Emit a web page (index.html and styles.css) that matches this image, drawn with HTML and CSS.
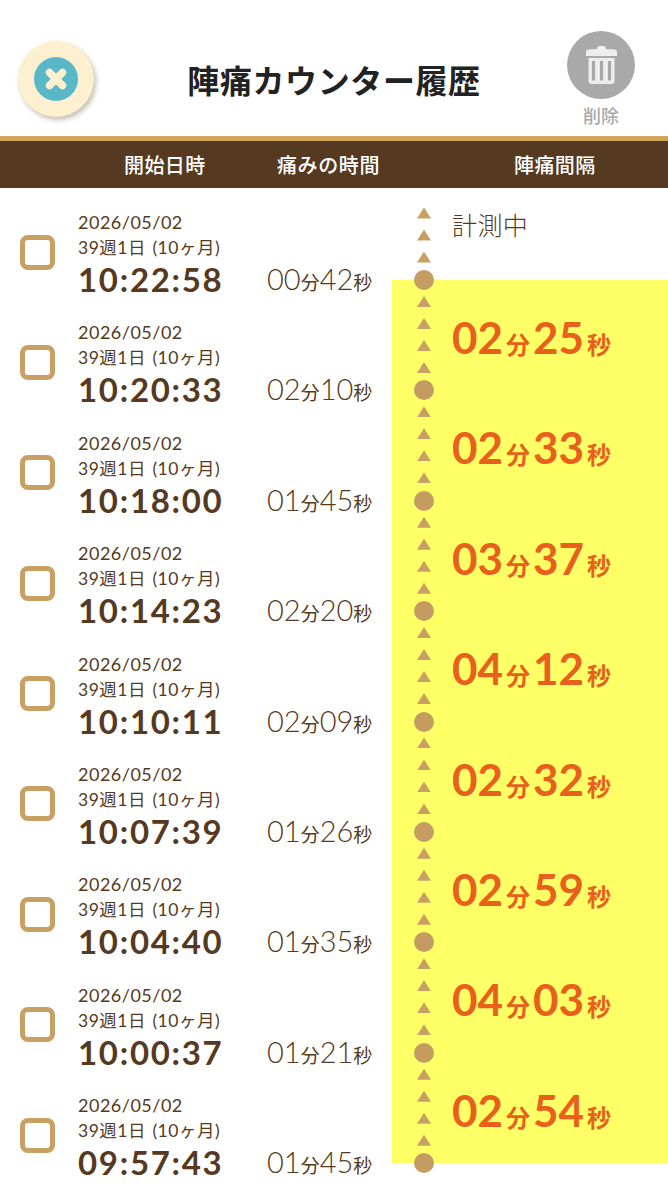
FILE: index.html
```html
<!DOCTYPE html>
<html lang="ja">
<head>
    <meta charset="UTF-8">
    <meta name="viewport" content="width=device-width, initial-scale=1.0">
    <title>陣痛カウンター履歴</title>
    <link rel="stylesheet" href="styles.css">
</head>
<body>
    <header class="top-bar">
        <button class="close-btn" type="button" aria-label="閉じる">
            <span class="close-badge">
                <svg viewBox="0 0 24 24" width="24" height="24"><path d="M5.500 5.500 18.500 18.500M18.500 5.500 5.500 18.500" stroke="#fdf0d0" stroke-width="7.500" stroke-linecap="round"/></svg>
            </span>
        </button>
        <h1>陣痛カウンター履歴</h1>
        <div class="delete-btn">
            <span class="delete-badge">
                <svg viewBox="0 0 31 38" width="31" height="38">
                    <path d="M11 3Q11 0 14 0H17Q20 0 20 3L29 3.500Q31 3.700 31 6V10H0V6Q0 3.700 2 3.500Z" fill="#eee"/>
                    <path d="M2.500 12H28.500V35Q28.500 38 25.500 38H5.500Q2.500 38 2.500 35Z" fill="#eee"/>
                    <path d="M7.500 15V34.500M15.500 15V34.500M23.500 15V34.500" stroke="#a9a9a9" stroke-width="3.200"/>
                </svg>
            </span>
            <span class="delete-label">削除</span>
        </div>
    </header>

    <div class="col-head">
        <span class="col-start">開始日時</span>
        <span class="col-pain">痛みの時間</span>
        <span class="col-gap">陣痛間隔</span>
    </div>

    <main class="history">
        <div class="records">
            <div class="record">
                <span class="check"></span>
                <div class="date">2026/05/02</div>
                <div class="week">39週1日 (10ヶ月)</div>
                <div class="time">10:22:58</div>
                <div class="pain">00<small>分</small>42<small>秒</small></div>
            </div>
            <div class="record">
                <span class="check"></span>
                <div class="date">2026/05/02</div>
                <div class="week">39週1日 (10ヶ月)</div>
                <div class="time">10:20:33</div>
                <div class="pain">02<small>分</small>10<small>秒</small></div>
            </div>
            <div class="record">
                <span class="check"></span>
                <div class="date">2026/05/02</div>
                <div class="week">39週1日 (10ヶ月)</div>
                <div class="time">10:18:00</div>
                <div class="pain">01<small>分</small>45<small>秒</small></div>
            </div>
            <div class="record">
                <span class="check"></span>
                <div class="date">2026/05/02</div>
                <div class="week">39週1日 (10ヶ月)</div>
                <div class="time">10:14:23</div>
                <div class="pain">02<small>分</small>20<small>秒</small></div>
            </div>
            <div class="record">
                <span class="check"></span>
                <div class="date">2026/05/02</div>
                <div class="week">39週1日 (10ヶ月)</div>
                <div class="time">10:10:11</div>
                <div class="pain">02<small>分</small>09<small>秒</small></div>
            </div>
            <div class="record">
                <span class="check"></span>
                <div class="date">2026/05/02</div>
                <div class="week">39週1日 (10ヶ月)</div>
                <div class="time">10:07:39</div>
                <div class="pain">01<small>分</small>26<small>秒</small></div>
            </div>
            <div class="record">
                <span class="check"></span>
                <div class="date">2026/05/02</div>
                <div class="week">39週1日 (10ヶ月)</div>
                <div class="time">10:04:40</div>
                <div class="pain">01<small>分</small>35<small>秒</small></div>
            </div>
            <div class="record">
                <span class="check"></span>
                <div class="date">2026/05/02</div>
                <div class="week">39週1日 (10ヶ月)</div>
                <div class="time">10:00:37</div>
                <div class="pain">01<small>分</small>21<small>秒</small></div>
            </div>
            <div class="record">
                <span class="check"></span>
                <div class="date">2026/05/02</div>
                <div class="week">39週1日 (10ヶ月)</div>
                <div class="time">09:57:43</div>
                <div class="pain">01<small>分</small>45<small>秒</small></div>
            </div>
        </div>

        <div class="intervals">
            <section class="segment segment-current">
                <div class="track"><i class="tri"></i><i class="tri"></i><i class="tri"></i><i class="dot"></i></div>
                <div class="measuring">計測中</div>
            </section>
            <section class="segment">
                <div class="track"><i class="tri"></i><i class="tri"></i><i class="tri"></i><i class="tri"></i><i class="dot"></i></div>
                <div class="gap">02<small>分</small>25<small>秒</small></div>
            </section>
            <section class="segment">
                <div class="track"><i class="tri"></i><i class="tri"></i><i class="tri"></i><i class="tri"></i><i class="dot"></i></div>
                <div class="gap">02<small>分</small>33<small>秒</small></div>
            </section>
            <section class="segment">
                <div class="track"><i class="tri"></i><i class="tri"></i><i class="tri"></i><i class="tri"></i><i class="dot"></i></div>
                <div class="gap">03<small>分</small>37<small>秒</small></div>
            </section>
            <section class="segment">
                <div class="track"><i class="tri"></i><i class="tri"></i><i class="tri"></i><i class="tri"></i><i class="dot"></i></div>
                <div class="gap">04<small>分</small>12<small>秒</small></div>
            </section>
            <section class="segment">
                <div class="track"><i class="tri"></i><i class="tri"></i><i class="tri"></i><i class="tri"></i><i class="dot"></i></div>
                <div class="gap">02<small>分</small>32<small>秒</small></div>
            </section>
            <section class="segment">
                <div class="track"><i class="tri"></i><i class="tri"></i><i class="tri"></i><i class="tri"></i><i class="dot"></i></div>
                <div class="gap">02<small>分</small>59<small>秒</small></div>
            </section>
            <section class="segment">
                <div class="track"><i class="tri"></i><i class="tri"></i><i class="tri"></i><i class="tri"></i><i class="dot"></i></div>
                <div class="gap">04<small>分</small>03<small>秒</small></div>
            </section>
            <section class="segment">
                <div class="track"><i class="tri"></i><i class="tri"></i><i class="tri"></i><i class="tri"></i><i class="dot"></i></div>
                <div class="gap">02<small>分</small>54<small>秒</small></div>
            </section>
        </div>
    </main>
</body>
</html>
```

FILE: styles.css
```css
* {
    box-sizing: border-box;
}

body {
    margin: 0;
    background: white;
    color: #553a21;
    font-family: Lato, "Noto Sans CJK JP", sans-serif;
}

.top-bar {
    display: flex;
    height: 136px;
    padding: 31px 33px 0 18px;
}

.close-btn {
    display: flex;
    align-items: center;
    justify-content: center;
    flex: none;
    width: 76px;
    height: 76px;
    margin-top: 10px;
    padding: 0;
    border: none;
    border-radius: 50%;
    background: #fdf0d0;
    box-shadow: 2px 3px 5px rgba(90,70,30,0.35);
}

.close-badge {
    display: flex;
    align-items: center;
    justify-content: center;
    width: 44px;
    height: 44px;
    border-radius: 50%;
    background: #58b8c8;
}

h1 {
    flex: 1;
    margin: 28px 0 0;
    padding-left: 7px;
    color: #222;
    font-family: "Noto Sans CJK JP", sans-serif;
    font-size: 32px;
    font-weight: 700;
    letter-spacing: 0.6px;
    line-height: 40px;
    text-align: center;
}

.delete-btn {
    display: flex;
    flex-direction: column;
    align-items: center;
    flex: none;
    width: 68px;
}

.delete-badge {
    display: flex;
    align-items: center;
    justify-content: center;
    width: 68px;
    height: 68px;
    border-radius: 50%;
    background: #a9a9a9;
}

.delete-label {
    margin-top: 4px;
    color: #a9a9a9;
    font-family: "Noto Sans CJK JP", sans-serif;
    font-size: 18px;
    font-weight: 500;
    line-height: 24px;
}

.col-head {
    display: flex;
    align-items: center;
    height: 52px;
    padding-left: 124px;
    border-top: 5px solid #d2a35a;
    background: #553a21;
    color: white;
    font-family: "Noto Sans CJK JP", sans-serif;
    font-size: 20px;
    font-weight: 500;
    letter-spacing: 0.4px;
}

.col-start {
    width: 153px;
}

.col-pain {
    width: 237px;
    letter-spacing: 0.6px;
}

.history {
    display: flex;
}

.records {
    flex: none;
    width: 392px;
    padding: 21px 0 0 20px;
}

.record {
    display: grid;
    grid-template-columns: 58px 189px auto;
    grid-template-rows: 26px 26px 36px;
    margin-bottom: 22.4px;
}

.record:last-child {
    margin-bottom: 0;
}

.check {
    grid-row: 1 / 4;
    align-self: center;
    width: 35px;
    height: 35px;
    margin-top: -2px;
    border: 5px solid #c9a063;
    border-radius: 8px;
}

.date,
.week {
    grid-column: 2 / 4;
    font-size: 18px;
    font-weight: 400;
    letter-spacing: 0.5px;
    line-height: 26px;
}

.week {
    font-size: 17.5px;
    word-spacing: 1.5px;
}

.time {
    grid-column: 2;
    font-size: 33px;
    font-weight: 700;
    letter-spacing: 1.7px;
    line-height: 36px;
}

.pain {
    grid-column: 3;
    font-size: 29px;
    font-weight: 300;
    line-height: 36px;
    white-space: nowrap;
}

.pain small {
    font-family: "Noto Sans CJK JP", sans-serif;
    font-size: 19px;
    font-weight: 400;
}

.intervals {
    flex: 1;
}

.segment {
    display: flex;
    height: 110.4px;
    padding-left: 22px;
    background: #ffff66;
}

.segment-current {
    height: 92px;
    background: white;
}

.track {
    display: flex;
    flex-direction: column;
    align-items: center;
    justify-content: flex-end;
    flex: none;
    width: 20px;
}

.tri {
    width: 14px;
    height: 11px;
    margin-bottom: 11px;
    background: #c9a063;
    clip-path: polygon(50% 0, 100% 100%, 0 100%);
}

.dot {
    flex: none;
    width: 20px;
    height: 20px;
    margin: -3.5px 0 -10px;
    border-radius: 50%;
    background: #c49c62;
    position: relative;
}

.measuring {
    margin: 18px 0 0 18px;
    font-family: "Noto Sans CJK JP", sans-serif;
    font-size: 25px;
    font-weight: 300;
    letter-spacing: 0.4px;
    line-height: 36px;
}

.gap {
    margin: 27px 0 0 18px;
    color: #e8601c;
    font-size: 44px;
    font-weight: 700;
    line-height: 60px;
    white-space: nowrap;
}

.gap small {
    margin: 0 3px;
    font-family: "Noto Sans CJK JP", sans-serif;
    font-size: 24px;
    font-weight: 700;
}
```
